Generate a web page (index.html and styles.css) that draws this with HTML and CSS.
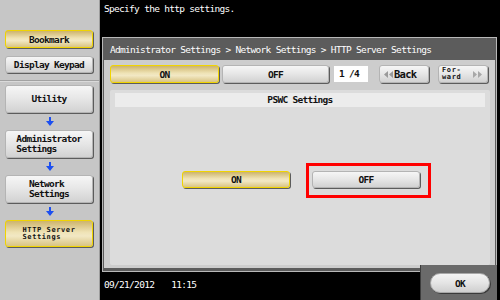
FILE: index.html
```html
<!DOCTYPE html>
<html lang="en">
    <head>
        <meta charset="UTF-8">
        <title>HTTP Server Settings</title>
        <link rel="stylesheet" href="styles.css">
    </head>
    <body>
        <div class="screen">

            <aside class="side">
                <div class="side-top">
                    <div class="btn yellow side-btn bookmark">Bookmark</div>
                    <div class="btn side-btn keypad">Display Keypad</div>
                </div>
                <div class="crumbs">
                    <div class="btn side-btn tall"><span>Utility</span></div>
                    <div class="down"><svg width="8" height="9" viewBox="0 0 8 9"><path d="M3 0h2v4h3l-4 5l-4-5h3z" fill="#1c4ff0"/></svg></div>
                    <div class="btn side-btn tall"><span>Administrator<br>Settings</span></div>
                    <div class="down"><svg width="8" height="9" viewBox="0 0 8 9"><path d="M3 0h2v4h3l-4 5l-4-5h3z" fill="#1c4ff0"/></svg></div>
                    <div class="btn side-btn tall"><span>Network<br>Settings</span></div>
                    <div class="down"><svg width="8" height="9" viewBox="0 0 8 9"><path d="M3 0h2v4h3l-4 5l-4-5h3z" fill="#1c4ff0"/></svg></div>
                    <div class="btn yellow side-btn tall current"><span>HTTP Server<br>Settings</span></div>
                </div>
            </aside>

            <main class="main">
                <div class="message">Specify the http settings.</div>

                <div class="frame">
                    <div class="title">Administrator Settings &gt; Network Settings &gt; HTTP Server Settings</div>
                    <div class="body">
                        <div class="toolbar">
                            <div class="btn yellow tool-wide">ON</div>
                            <div class="btn tool-wide">OFF</div>
                            <div class="page">1 /4</div>
                            <div class="btn nav back">
                                <svg width="9" height="7" viewBox="0 0 9 7"><path d="M4 0v7l-4-3.5z M9 0v7l-4-3.5z" fill="#9a9a9a"/></svg>
                                <span>Back</span>
                            </div>
                            <div class="btn nav forward">
                                <span class="small">For-<br>ward</span>
                                <svg width="9" height="7" viewBox="0 0 9 7"><path d="M0 0v7l4-3.5z M5 0v7l4-3.5z" fill="#a8a8a8"/></svg>
                            </div>
                        </div>

                        <div class="panel">
                            <div class="panel-head">PSWC Settings</div>
                            <div class="choices">
                                <div class="btn yellow choice">ON</div>
                                <div class="marked">
                                    <div class="btn choice">OFF</div>
                                    <div class="highlight"></div>
                                </div>
                            </div>
                        </div>
                    </div>
                </div>

                <div class="footer">
                    <div class="clock"><span>09/21/2012</span><span>11:15</span></div>
                    <div class="tab">
                        <div class="btn ok">OK</div>
                    </div>
                </div>
            </main>

        </div>
    </body>
</html>
```

FILE: styles.css
```css
* {
    box-sizing: border-box;
}

body {
    margin: 0;
    background: #000;
    font-family: "DejaVu Sans Mono", "Liberation Mono", monospace;
    font-size: 9.5px;
    letter-spacing: -0.7px;
}

.screen {
    display: flex;
    width: 500px;
    height: 300px;
    overflow: hidden;
}

/* left column */
.side {
    width: 100px;
    background: #c6c6c6;
    border-right: 1px solid #9c9c9c;
}

.side-top {
    height: 81px;
    padding-top: 30px;
    border-bottom: 1px solid #a2a2a2;
    box-shadow: 0 1px 0 #dadada;
}

.crumbs {
    padding-top: 4px;
}

.btn {
    display: flex;
    align-items: center;
    justify-content: center;
    color: #111;
    font-weight: bold;
    border: 1px solid #b4b4b4;
    border-radius: 3px;
    background: linear-gradient(#f6f6f6, #e6e6e6 50%, #d2d2d2);
    box-shadow: 1px 1px 0 #5c5c5c;
}

.btn.yellow {
    border-color: #f0d400;
    background: linear-gradient(#cdb46c, #efe3b6 45%, #f2e8c4 60%, #d9c482);
}

.side-btn {
    width: 88px;
    margin-left: 5px;
}

.bookmark {
    height: 18px;
    margin-bottom: 8px;
}

.keypad {
    height: 17px;
}

.tall {
    height: 28px;
    line-height: 10px;
}

.tall span {
    display: inline-block;
    text-align: left;
}

.current {
    height: 27px;
    font-size: 7px;
    line-height: 7px;
    letter-spacing: 0.6px;
}

.down {
    height: 17px;
    display: flex;
    align-items: center;
    justify-content: center;
}

/* right side */
.main {
    width: 400px;
    display: flex;
    flex-direction: column;
}

.message {
    height: 37px;
    padding: 4px 4px;
    color: #fff;
    line-height: 10px;
}

.frame {
    width: 395px;
    height: 235px;
    margin-left: 2px;
    border: 1px solid #b8b8b8;
    padding: 1px 1px 3px 1px;
    background: #5c5c5c;
    display: flex;
    flex-direction: column;
}

.title {
    height: 21px;
    padding-left: 6px;
    line-height: 21px;
    color: #fff;
}

.body {
    flex: 1;
    background: #cdcdcd;
    padding: 5px 5px 3px 6px;
    display: flex;
    flex-direction: column;
}

.toolbar {
    display: flex;
    align-items: center;
    height: 18px;
    margin-bottom: 7px;
}

.tool-wide {
    width: 109px;
    height: 18px;
    margin-right: 3px;
}

.tool-wide + .tool-wide {
    width: 107px;
}

.page {
    width: 34px;
    height: 16px;
    margin-left: 2px;
    padding-left: 5px;
    background: #fff;
    color: #111;
    font-weight: bold;
    line-height: 16px;
}

.nav {
    width: 50px;
    height: 18px;
    margin-left: 11px;
}

.back {
    justify-content: flex-start;
    padding-left: 4px;
    gap: 1px;
    font-size: 10.5px;
}

.forward {
    margin-left: 9px;
    justify-content: space-between;
    padding: 0 5px 0 3px;
}

.small {
    font-size: 7px;
    line-height: 7px;
    letter-spacing: 0.6px;
}

.panel {
    flex: 1;
    background: #dcdcdc;
    border-radius: 2px;
    padding: 3px 5px;
}

.panel-head {
    height: 14px;
    background: #ececec;
    color: #111;
    font-weight: bold;
    text-align: center;
    line-height: 14px;
}

.choices {
    display: flex;
    justify-content: center;
    gap: 22px;
    padding-top: 64px;
    padding-left: 2px;
}

.choice {
    width: 108px;
    height: 17px;
}

.marked {
    position: relative;
}

.highlight {
    position: absolute;
    left: -6px;
    top: -8px;
    right: -11px;
    bottom: -10px;
    border: 3px solid #f00;
}

.footer {
    flex: 1;
    display: flex;
}

.clock {
    flex: 1;
    padding: 8px 0 0 4px;
    color: #fff;
    line-height: 10px;
}

.clock span + span {
    margin-left: 17px;
}

.tab {
    width: 77px;
    margin-right: 3px;
    margin-top: -7px;
    background: #6a6a6a;
    border-left: 1px solid #3c3c3c;
    padding: 8px 0 0 9px;
}

.ok {
    width: 60px;
    height: 20px;
    border-radius: 10px;
    border-color: #a8a8a8;
    background: linear-gradient(#f4f4f4, #e4e4e4 50%, #cfcfcf);
    box-shadow: 1px 1px 0 #3a3a3a;
}
```
